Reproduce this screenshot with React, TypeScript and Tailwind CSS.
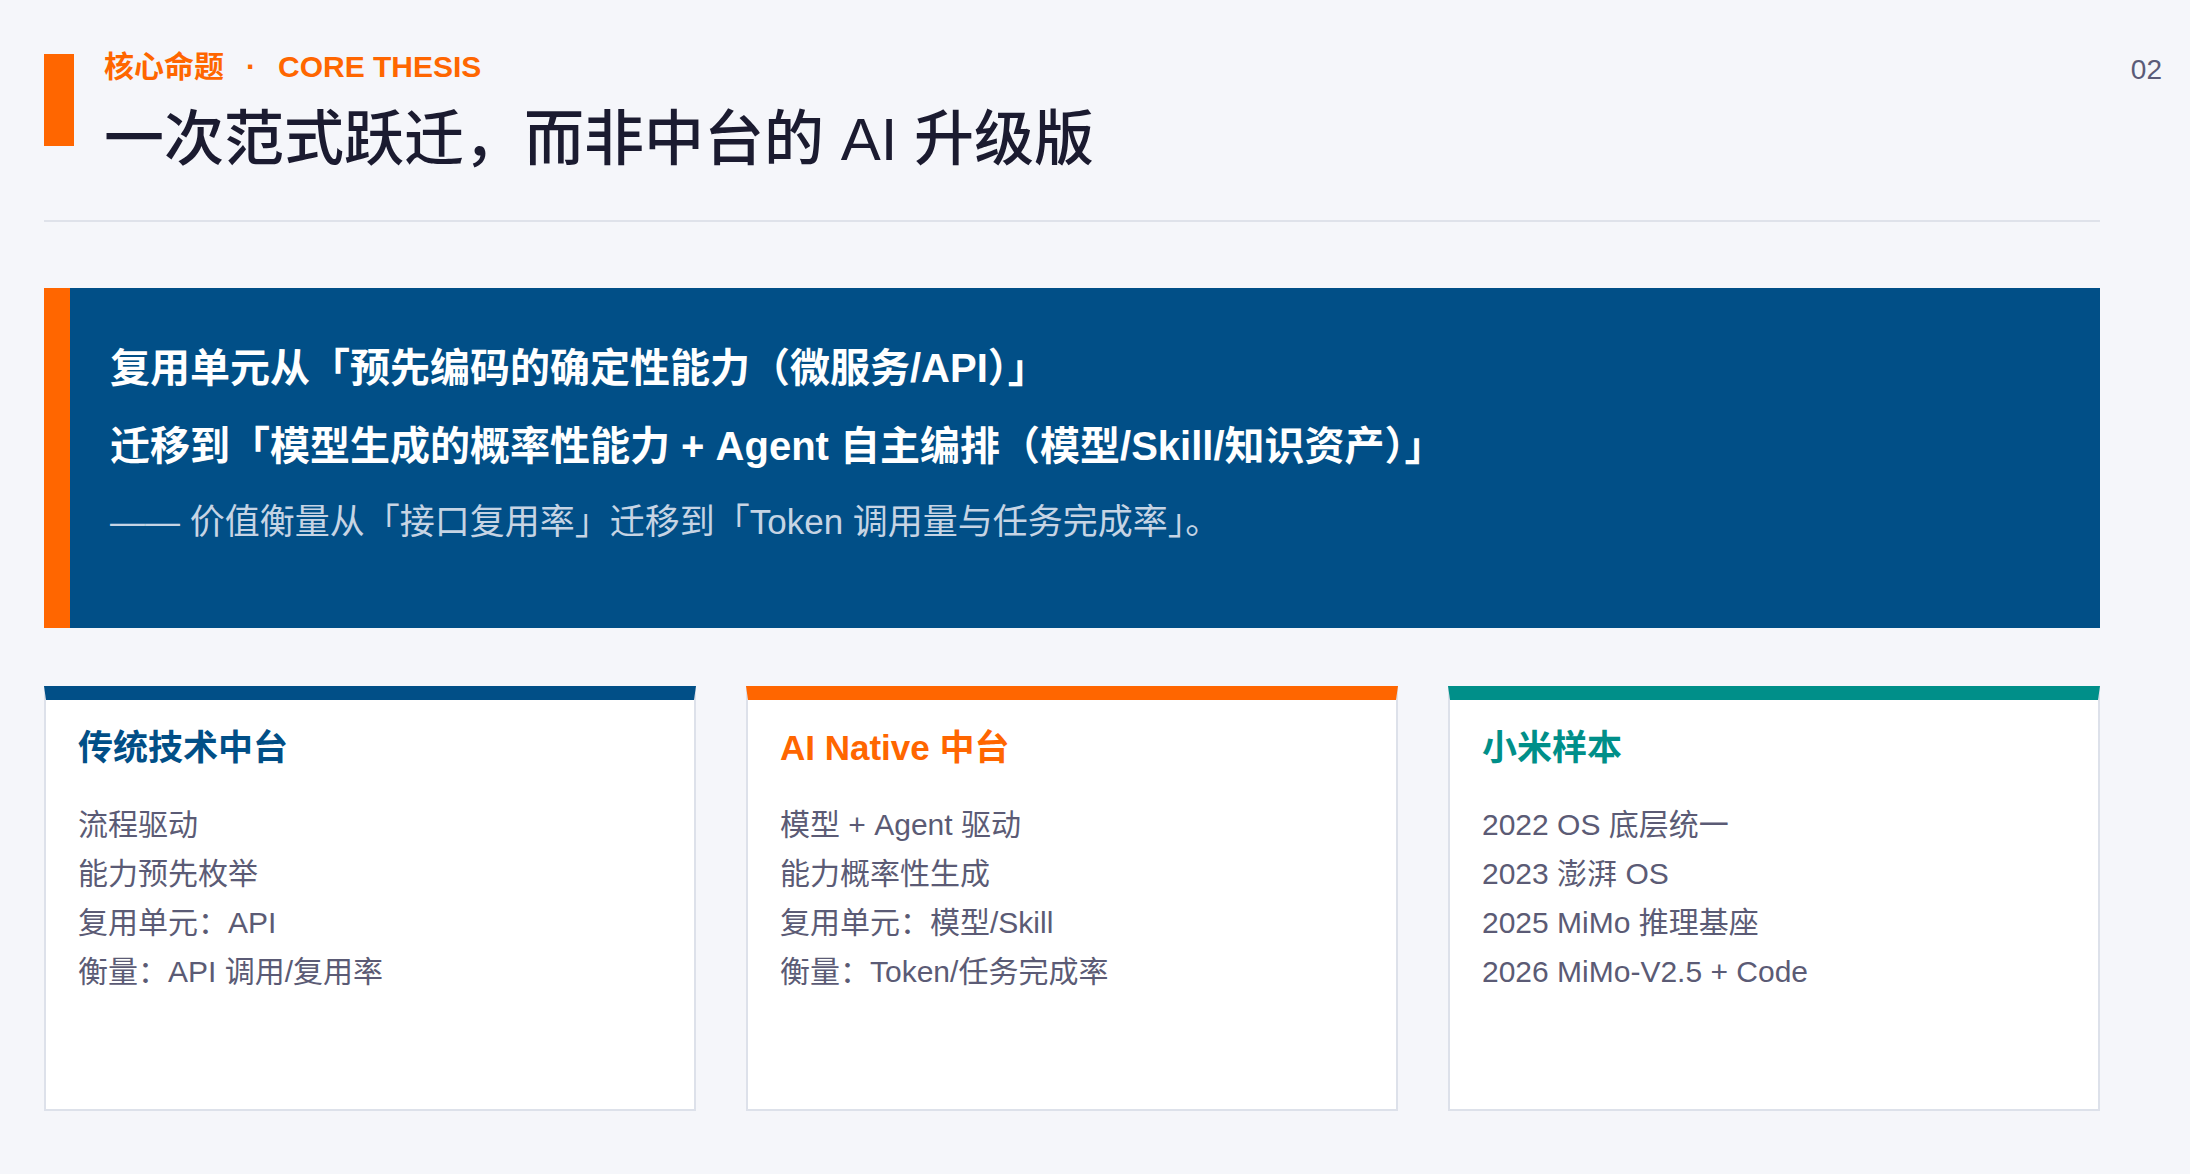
const cards = [
  {
    title: '传统技术中台',
    bar: 'border-t-[#014f87]',
    color: 'text-[#014f87]',
    items: ['流程驱动', '能力预先枚举', '复用单元：API', '衡量：API 调用/复用率'],
  },
  {
    title: 'AI Native 中台',
    bar: 'border-t-[#ff6600]',
    color: 'text-[#ff6600]',
    items: ['模型 + Agent 驱动', '能力概率性生成', '复用单元：模型/Skill', '衡量：Token/任务完成率'],
  },
  {
    title: '小米样本',
    bar: 'border-t-[#008f89]',
    color: 'text-[#008f89]',
    items: ['2022 OS 底层统一', '2023 澎湃 OS', '2025 MiMo 推理基座', '2026 MiMo-V2.5 + Code'],
  },
]

export default function App() {
  return (
    <div className="min-h-screen w-full bg-[#f5f6fa] flex font-['Liberation_Sans','Noto_Sans_CJK_SC',sans-serif]">
      <main className="w-[2056px] ml-[44px] pt-[54px] pb-[61px]">
        {/* header */}
        <div className="flex gap-[30px]">
          <div className="w-[30px] h-[92px] bg-[#ff6600] shrink-0" />
          <div>
            <div className="-mt-[2px] text-[30px] leading-[30px] font-bold text-[#ff6600]">
              <span>核心命题</span>
              <span className="mx-[22px]">·</span>
              <span>CORE THESIS</span>
            </div>
            <h1 className="mt-[28px] text-[60px] leading-[60px] font-medium text-[#1b1b30]">
              一次范式跃迁，而非中台的 AI 升级版
            </h1>
          </div>
        </div>

        <div className="mt-[50px] h-[2px] bg-[#dfe2ea]" />

        {/* thesis */}
        <div className="mt-[66px] h-[340px] flex bg-[#014f87]">
          <div className="w-[26px] bg-[#ff6600] shrink-0" />
          <div className="pl-[40px] pt-[41px]">
            <p className="text-[40px] leading-[78px] font-bold text-white">
              复用单元从「预先编码的确定性能力（微服务/API）」
            </p>
            <p className="text-[40px] leading-[78px] font-bold text-white">
              迁移到「模型生成的概率性能力 + Agent 自主编排（模型/Skill/知识资产）」
            </p>
            <p className="text-[35px] leading-[74px] text-[#c6d4e4]">
              —— 价值衡量从「接口复用率」迁移到「Token 调用量与任务完成率」。
            </p>
          </div>
        </div>

        {/* comparison */}
        <div className="mt-[58px] grid grid-cols-3 gap-[50px]">
          {cards.map((card) => (
            <div
              key={card.title}
              className={`h-[425px] bg-white border-2 border-[#dde1ea] border-t-[14px] ${card.bar} px-[32px] pt-[28px]`}
            >
              <h3 className={`text-[35px] leading-[40px] font-bold ${card.color}`}>{card.title}</h3>
              <ul className="mt-[32px] text-[30px] leading-[49px] text-[#5b5b75]">
                {card.items.map((item) => (
                  <li key={item}>{item}</li>
                ))}
              </ul>
            </div>
          ))}
        </div>
      </main>

      <aside className="flex-1 flex justify-end pr-[28px] pt-[53px]">
        <span className="text-[28px] leading-[34px] text-[#5b5b78]">02</span>
      </aside>
    </div>
  )
}
